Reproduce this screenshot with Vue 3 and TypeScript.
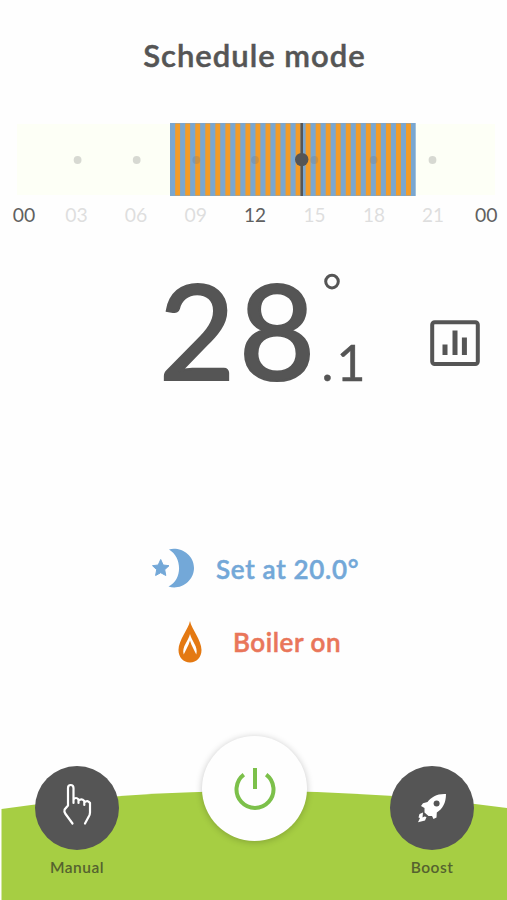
<script setup lang="ts">
interface Tick { label: string; x: number; strong: boolean; width: number }

const ticks: Tick[] = [
  { label: '00', x: 24, strong: true, width: 22.5 },
  { label: '03', x: 76.5, strong: false, width: 22.5 },
  { label: '06', x: 136, strong: false, width: 22.5 },
  { label: '09', x: 195.7, strong: false, width: 22.5 },
  { label: '12', x: 255, strong: true, width: 22 },
  { label: '15', x: 314.5, strong: false, width: 22 },
  { label: '18', x: 374, strong: false, width: 22 },
  { label: '21', x: 433, strong: false, width: 22 },
  { label: '00', x: 486.3, strong: true, width: 22.5 },
]
const dots: number[] = [77.6, 136.7, 196.3, 255, 314.3, 373.6, 432.5]
const stripes: number[] = Array.from({ length: 24 }, (_, i) => 175.2 + i * 10.035)
</script>

<template>
  <main class="screen">
    <h1 class="title">Schedule mode</h1>

    <svg class="timeline" width="507" height="110" viewBox="0 120 507 110">
      <rect x="17" y="124" width="478" height="71" fill="#fdfff6" />
      <rect x="170" y="123" width="245.7" height="73" fill="#7aa7d0" />
      <rect v-for="s in stripes" :key="s" :x="s" y="123.5" width="4.9" height="72" fill="#f39c28" />
      <circle v-for="d in dots" :key="d" :cx="d" cy="160" r="3.9" fill="#777" fill-opacity=".28" />
      <rect x="300.5" y="123" width="2.5" height="73" fill="#555" />
      <circle cx="301.7" cy="159.6" r="6.7" fill="#555" />
      <text
        v-for="t in ticks" :key="t.x" :x="t.x" y="221.5"
        :class="['tick', { strong: t.strong }]" :textLength="t.width" lengthAdjust="spacingAndGlyphs"
      >{{ t.label }}</text>
    </svg>

    <section class="reading">
      <svg class="temperature" width="220" height="130" viewBox="155 265 220 130">
        <text x="158.8 238.7" y="380" class="whole">28</text>
        <circle cx="332" cy="281.6" r="6.3" fill="none" stroke="#555" stroke-width="3" />
        <text x="321.5 336.5" y="381" class="decimal">.1</text>
      </svg>
      <svg class="chart" width="50" height="46" viewBox="0 0 50 46">
        <rect x="2.2" y="2.2" width="45.6" height="41.8" rx="2.5" fill="none" stroke="#555" stroke-width="4" />
        <path d="M15 24.5V35M25 10.5V35M34.4 17.5V35" stroke="#555" stroke-width="5" />
      </svg>
    </section>

    <section class="status">
      <div class="row set">
        <svg width="44" height="42" viewBox="0 0 44 42">
          <path d="M17 2.500C28-.5 42 7.500 42 21C42 34.500 28 43.500 16.500 39.500C30.500 32.500 30.500 10.500 17 2.500Z" fill="#73a8d8" />
          <path d="M8.700 12.500L11.200 18L17 18.700L12.700 22.700L13.800 28.500L8.700 25.700L3.600 28.500L4.700 22.700L.5 18.700L6.200 18Z" fill="#73a8d8" stroke="#73a8d8" stroke-linejoin="round" />
        </svg>
        <span class="set-text">Set at 20.0°</span>
      </div>
      <div class="row boiler">
        <svg width="24" height="42" viewBox="0 0 24 42">
          <path d="M12 0C13.500 8 23.500 19 23.500 29C23.500 36.500 18.500 41.500 12 41.500S.5 36.500 .5 29C.5 19 10.500 8 12 0Z" fill="#e47912" />
          <path d="M5.700 33.500C3.500 25.500 10.500 20 12 13C13.500 20 20.500 25.500 18.300 33.500C16.500 29.500 13.500 25 12 19.500C10.500 25 7.500 29.500 5.700 33.500Z" fill="#fff" />
        </svg>
        <span class="boiler-text">Boiler on</span>
      </div>
    </section>

    <footer class="controls">
      <svg class="hill" width="507" height="112" viewBox="0 788 507 112">
        <path d="M1.500 809Q128 791 254 791T507 808V900H1.500Z" fill="#a6ce43" />
      </svg>
      <div class="actions">
        <button class="action">
          <span class="disc">
            <svg width="84" height="84" viewBox="0 0 84 84" fill="none" stroke="#fff" stroke-width="2.200" stroke-linecap="round" stroke-linejoin="round">
              <path d="M37.500 57.500L30.200 47.500Q29 45.500 29.600 43.500L33 39.500V22Q33 19 35.700 19T38.500 22V35M38.500 37V33.500Q41 30.500 43.500 33.500V37M43.500 34.800Q46.500 32 49.300 35V39M49.300 36.500Q52.500 33.500 55 37V46.500Q55 49 53.500 51L50 57.500" />
            </svg>
          </span>
          <span class="label">Manual</span>
        </button>
        <button class="power">
          <svg width="44" height="44" viewBox="0 0 44 44" fill="none" stroke="#7cc04a" stroke-width="4">
            <path d="M10.800 7.700A18.500 18.500 0 1 0 33.200 7.700M22 1V22" />
          </svg>
        </button>
        <button class="action">
          <span class="disc">
            <svg width="84" height="84" viewBox="0 0 84 84">
              <path d="M56 28C47 27.500 41.500 31 37.500 36L33 37.200L31 40L34.500 42V46.500L38.500 50H42L43.500 53L46.500 51.500L46.800 46.500C52.500 43 56 37 56 28Z" fill="#fff" />
              <path d="M33 46.500L29.500 48L28.500 51.500L30 52L28 56.200L35 54.500L36.500 51L34.500 50.500L32.500 51.500Z" fill="#fff" />
              <circle cx="46.600" cy="37.500" r="3" fill="#555" />
            </svg>
          </span>
          <span class="label">Boost</span>
        </button>
      </div>
    </footer>
  </main>
</template>

<style>
body { margin: 0; background: #fefefe; }
</style>

<style scoped>
.screen {
  width: 507px;
  height: 900px;
  overflow: hidden;
  display: flex;
  flex-direction: column;
  background: #fefefe;
  color: #555;
  font-family: Lato, "Noto Sans", sans-serif;
}
.title {
  margin: 0;
  height: 120px;
  padding-top: 35px;
  padding-left: 2px;
  box-sizing: border-box;
  text-align: center;
  font-size: 31px;
  line-height: 40px;
  font-weight: 600;
  letter-spacing: 1px;
  -webkit-text-stroke: .5px currentColor;
}
.timeline { display: block; flex: none; }
.tick { font-size: 18.5px; text-anchor: middle; fill: #dedede; }
.tick.strong { fill: #606060; }
.reading { display: flex; flex: none; height: 130px; padding: 35px 27px 0 155px; justify-content: space-between; }
.temperature { display: block; overflow: visible; }
.whole { font-size: 132px; fill: #555; stroke: #555; stroke-width: 2.2px; }
.decimal { font-size: 50px; fill: #555; stroke: #555; stroke-width: .4px; }
.chart { margin-top: 55px; }
.status { flex: none; height: 262px; padding-top: 152px; box-sizing: border-box; }
.row { display: flex; align-items: center; height: 42px; font-size: 26px; font-weight: 600; white-space: nowrap; letter-spacing: .55px; -webkit-text-stroke: .5px currentColor; }
.set { padding-left: 152px; gap: 20px; color: #73a8d8; }
.set-text { padding-top: 2px; letter-spacing: .7px; }
.boiler { padding-left: 178px; gap: 31px; margin-top: 32px; color: #e9765a; }
.controls { display: grid; height: 243px; flex: none; margin-top: auto; }
.hill { grid-area: 1 / 1; align-self: end; display: block; }
.actions { grid-area: 1 / 1; display: flex; justify-content: space-between; align-items: flex-start; padding: 79px 33px 0 35px; }
button { border: 0; padding: 0; margin: 0; background: none; font: inherit; color: inherit; }
.action { display: flex; flex-direction: column; align-items: center; width: 84px; margin-top: 30px; }
.disc { display: block; width: 84px; height: 84px; border-radius: 50%; background: #555; }
.disc svg { display: block; }
.label { margin-top: 6px; font-size: 15.5px; line-height: 22px; font-weight: 600; letter-spacing: .5px; color: #55622f; }
.power {
  width: 105px;
  height: 105px;
  border-radius: 50%;
  background: #fefefe;
  display: flex;
  align-items: center;
  justify-content: center;
  box-shadow: 0 1px 7px rgba(0, 0, 0, .22);
}
</style>
